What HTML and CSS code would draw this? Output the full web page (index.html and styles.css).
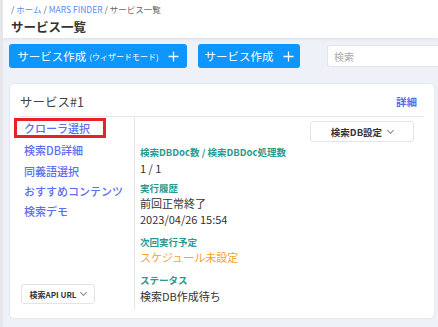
FILE: index.html
```html
<!DOCTYPE html>
<html lang="ja">

<head>
  <meta charset="UTF-8">
  <title>サービス一覧 | MARS FINDER</title>
  <link rel="stylesheet" href="styles.css">
</head>

<body>

  <header class="page-header">
    <div class="breadcrumb">
      / <a href="#">ホーム</a> / <a href="#">MARS FINDER</a> / サービス一覧
    </div>
    <h1>サービス一覧</h1>
  </header>

  <div class="toolbar">
    <button class="btn-primary wide">サービス作成 <small>(ウィザードモード)</small>
      <svg class="plus" viewBox="0 0 12 12"><path d="M6 0.5V11.5M0.5 6H11.5" /></svg>
    </button>
    <button class="btn-primary">サービス作成
      <svg class="plus" viewBox="0 0 12 12"><path d="M6 0.5V11.5M0.5 6H11.5" /></svg>
    </button>
    <input class="search" type="text" placeholder="検索">
  </div>

  <div class="card">
    <div class="card-head">
      <h2>サービス#1</h2>
      <a href="#" class="detail">詳細</a>
    </div>

    <div class="card-body">
      <div class="side">
        <ul class="side-links">
          <li><a href="#" class="marked">クローラ選択</a></li>
          <li><a href="#">検索DB詳細</a></li>
          <li><a href="#">同義語選択</a></li>
          <li><a href="#">おすすめコンテンツ</a></li>
          <li><a href="#">検索デモ</a></li>
        </ul>
        <button class="btn-select small">検索API URL <span class="caret"></span></button>
      </div>

      <div class="info">
        <div class="info-top">
          <button class="btn-select">検索DB設定 <span class="caret"></span></button>
        </div>
        <dl>
          <dt>検索DBDoc数 / 検索DBDoc処理数</dt>
          <dd>1 / 1</dd>
          <dt>実行履歴</dt>
          <dd class="gap">前回正常終了<br>2023/04/26 15:54</dd>
          <dt>次回実行予定</dt>
          <dd class="warn gap">スケジュール未設定</dd>
          <dt>ステータス</dt>
          <dd>検索DB作成待ち</dd>
        </dl>
      </div>
    </div>
  </div>

</body>

</html>
```

FILE: styles.css
```css
* {
  box-sizing: border-box;
  margin: 0;
  padding: 0;
  font-family: 'Noto Sans CJK JP', 'Noto Sans', sans-serif;
}

body {
  background: #eef1f7;
  color: #333;
  width: 438px;
  height: 327px;
  overflow: hidden;
  border-left: 3px solid #e4e6ea;
}

.page-header {
  background: #fff;
  padding: 2px 8px 0 8px;
  height: 38px;
  box-shadow: 0 1px 3px rgba(0, 0, 0, 0.08);
}

.breadcrumb {
  font-size: 8.5px;
  color: #666;
  line-height: 14px;
}

.breadcrumb a {
  color: #5b8dee;
  text-decoration: none;
}

.page-header h1 {
  font-size: 12.5px;
  font-weight: 700;
  color: #333;
  line-height: 18px;
  margin-top: 2px;
}

.toolbar {
  display: flex;
  align-items: center;
  padding: 6px 0 0 6px;
  gap: 11px;
}

.btn-primary {
  background: #0d96fb;
  color: #fff;
  border: none;
  border-radius: 3px;
  height: 24px;
  padding: 0;
  font-size: 11.5px;
  display: flex;
  align-items: center;
  justify-content: center;
  gap: 3px;
  width: 102px;
  white-space: nowrap;
}

.btn-primary.wide {
  width: 178px;
}

.btn-primary small {
  font-size: 8px;
}

.plus {
  width: 11px;
  height: 11px;
  margin-left: 6px;
  stroke: #fff;
  stroke-width: 1.4;
  fill: none;
}

.search {
  margin-left: 16px;
  height: 22px;
  flex: 1;
  min-width: 0;
  border: 1px solid #e3e5e9;
  border-right: none;
  border-radius: 3px 0 0 3px;
  padding: 0 6px;
  font-size: 10px;
  color: #333;
}

.search::placeholder {
  color: #aaa;
}

.card {
  background: #fff;
  margin: 16px 4px 0 7px;
  border-radius: 4px;
  box-shadow: 0 0 2px rgba(0, 0, 0, 0.12);
  padding: 0 10px 8px 10px;
  height: 234px;
}

.card-head {
  display: flex;
  justify-content: space-between;
  align-items: center;
  height: 33px;
  border-bottom: 1px solid #e6e6e6;
  padding: 2px 7px 0 0;
}

.card-head h2 {
  font-size: 12.5px;
  font-weight: 400;
  color: #444;
}

.detail {
  color: #5a6cf0;
  font-size: 10.5px;
  font-weight: 700;
  text-decoration: none;
}

.card-body {
  display: flex;
  height: 193px;
}

.side {
  width: 115px;
  border-right: 1px solid #e6e6e6;
  display: flex;
  flex-direction: column;
  justify-content: space-between;
  padding: 1px 0 6px 0;
}

.side-links {
  list-style: none;
}

.side-links li {
  line-height: 20px;
  height: 20.3px;
}

.side-links a {
  color: #5b6ef0;
  font-size: 11px;
  font-weight: 500;
  text-decoration: none;
  padding-left: 4px;
}

.side-links a.marked {
  display: block;
  border: 3px solid #e8202a;
  line-height: 14px;
  height: 20px;
  width: 92px;
  margin-left: -6px;
  padding-left: 7px;
}

.btn-select {
  background: #fff;
  border: 1px solid #e2e4e8;
  border-radius: 3px;
  height: 21px;
  font-size: 9.5px;
  font-weight: 700;
  color: #333;
  display: flex;
  align-items: center;
  justify-content: center;
  gap: 6px;
  width: 104px;
}

.btn-select.small {
  width: 74px;
  height: 20px;
  font-size: 8px;
  margin-left: 1px;
  gap: 5px;
}

.caret {
  width: 5px;
  height: 5px;
  border-right: 1px solid #888;
  border-bottom: 1px solid #888;
  transform: rotate(45deg);
  margin-top: -3px;
}

.info {
  flex: 1;
  padding: 4px 10px 0 5px;
}

.info-top {
  display: flex;
  justify-content: flex-end;
  margin-bottom: 2px;
}

dl dt {
  color: #2a9a8e;
  font-size: 9.5px;
  font-weight: 700;
  line-height: 16.5px;
}

dl dd {
  font-size: 11px;
  color: #333;
  line-height: 15.5px;
  margin-bottom: 3.5px;
}

dl dd.gap {
  margin-bottom: 6.5px;
}

dl dd.warn {
  color: #f5a32b;
}
```
